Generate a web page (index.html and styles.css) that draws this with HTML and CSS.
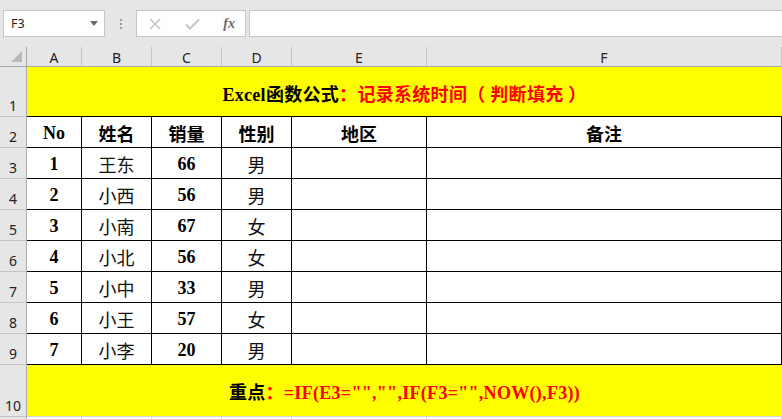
FILE: index.html
```html
<!DOCTYPE html>
<html lang="zh-CN">
  <head>
    <meta charset="UTF-8" />
    <title>记录系统时间</title>
    <link rel="stylesheet" href="styles.css">
  </head>
  <body>
    <div class="formula-bar">
      <div class="name-box">
        <span>F3</span>
        <svg class="drop" width="8" height="5" viewBox="0 0 8 5"><path d="M0 0H8L4 5Z" fill="#6a6a6a"/></svg>
      </div>
      <div class="grip"><i></i><i></i><i></i></div>
      <div class="fx-box">
        <svg width="12" height="12" viewBox="0 0 12 12"><path d="M1 1L11 11M11 1L1 11" stroke="#c4c4c4" stroke-width="1.6" fill="none"/></svg>
        <svg width="15" height="12" viewBox="0 0 15 12"><path d="M1 6.5L5 10.5L14 1.5" stroke="#c4c4c4" stroke-width="2" fill="none"/></svg>
        <span class="fx">fx</span>
      </div>
      <div class="formula-input"></div>
    </div>

    <div class="sheet">
      <div class="corner"><span class="tri"></span></div>
      <div class="col-head">A</div>
      <div class="col-head">B</div>
      <div class="col-head">C</div>
      <div class="col-head">D</div>
      <div class="col-head">E</div>
      <div class="col-head">F</div>

      <div class="row-head first">1</div>
      <div class="band title">Excel函数公式<em>：记录系统时间（ 判断填充 ）</em></div>

      <div class="row-head">2</div>
      <div class="cell head">No</div>
      <div class="cell head">姓名</div>
      <div class="cell head">销量</div>
      <div class="cell head">性别</div>
      <div class="cell head">地区</div>
      <div class="cell head">备注</div>

      <div class="row-head">3</div>
      <div class="cell num">1</div><div class="cell">王东</div><div class="cell num">66</div><div class="cell">男</div><div class="cell"></div><div class="cell"></div>
      <div class="row-head">4</div>
      <div class="cell num">2</div><div class="cell">小西</div><div class="cell num">56</div><div class="cell">男</div><div class="cell"></div><div class="cell"></div>
      <div class="row-head">5</div>
      <div class="cell num">3</div><div class="cell">小南</div><div class="cell num">67</div><div class="cell">女</div><div class="cell"></div><div class="cell"></div>
      <div class="row-head">6</div>
      <div class="cell num">4</div><div class="cell">小北</div><div class="cell num">56</div><div class="cell">女</div><div class="cell"></div><div class="cell"></div>
      <div class="row-head">7</div>
      <div class="cell num">5</div><div class="cell">小中</div><div class="cell num">33</div><div class="cell">男</div><div class="cell"></div><div class="cell"></div>
      <div class="row-head">8</div>
      <div class="cell num">6</div><div class="cell">小王</div><div class="cell num">57</div><div class="cell">女</div><div class="cell"></div><div class="cell"></div>
      <div class="row-head">9</div>
      <div class="cell num">7</div><div class="cell">小李</div><div class="cell num">20</div><div class="cell">男</div><div class="cell"></div><div class="cell"></div>

      <div class="row-head">10</div>
      <div class="band note">重点<em>：=IF(E3="","",IF(F3="",NOW(),F3))</em></div>

      <div class="row-head"></div>
      <div class="blank"></div><div class="blank"></div><div class="blank"></div><div class="blank"></div><div class="blank"></div><div class="blank"></div>
    </div>
  </body>
</html>
```

FILE: styles.css
```css
body {
  margin: 0;
  background: #fff;
  overflow: hidden;
  font-family: "Noto Sans", "Liberation Sans", sans-serif;
}
.formula-bar {
  height: 47px;
  box-sizing: border-box;
  background: #e6e6e6;
  display: flex;
  align-items: flex-start;
  padding: 10px 0 0 3px;
}
.name-box {
  width: 102px;
  height: 27px;
  box-sizing: border-box;
  background: #fff;
  border: 1px solid #c6c6c6;
  display: flex;
  align-items: center;
  justify-content: space-between;
  padding: 0 6px 0 7px;
  font-size: 12.5px;
  color: #222;
}
.grip {
  width: 31px;
  height: 27px;
  display: flex;
  flex-direction: column;
  align-items: center;
  justify-content: center;
  gap: 2px;
}
.grip i {
  width: 2px;
  height: 2px;
  background: #9a9a9a;
}
.fx-box {
  width: 110px;
  height: 27px;
  box-sizing: border-box;
  background: #fff;
  border: 1px solid #c6c6c6;
  display: flex;
  align-items: center;
  justify-content: space-between;
  padding: 0 10px 0 12px;
}
.fx {
  font-family: "Liberation Serif", serif;
  font-style: italic;
  font-weight: bold;
  font-size: 14px;
  color: #6a6a6a;
}
.formula-input {
  flex: 1;
  margin-left: 3px;
  height: 27px;
  box-sizing: border-box;
  background: #fff;
  border: 1px solid #c6c6c6;
  border-right: none;
}
.sheet {
  display: grid;
  grid-template-columns: 27px 55px 70px 70px 70px 135px 355px;
  grid-template-rows: 20px 49px repeat(8, 31px) 52px 3px;
  font-family: "Liberation Serif", "Noto Sans CJK SC", serif;
  font-size: 18px;
}
.sheet > div {
  box-sizing: border-box;
}
.corner {
  background: #e6e6e6;
  border-right: 1px solid #a9a9a9;
  border-bottom: 1px solid #a9a9a9;
  position: relative;
}
.tri {
  position: absolute;
  right: 4px;
  bottom: 4px;
  width: 0;
  height: 0;
  border-left: 11px solid transparent;
  border-bottom: 11px solid #b9b9b9;
}
.col-head {
  background: #e6e6e6;
  border-bottom: 1px solid #a9a9a9;
  border-right: 1px solid #c4c4c4;
  display: flex;
  align-items: center;
  justify-content: center;
  font-family: "Noto Sans", sans-serif;
  font-size: 14px;
  color: #222;
  padding-top: 1px;
}
.row-head {
  background: #e6e6e6;
  border-right: 1px solid #a9a9a9;
  border-top: 1px solid #c4c4c4;
  display: flex;
  align-items: flex-end;
  justify-content: center;
  font-family: "Noto Sans", sans-serif;
  font-size: 14px;
  color: #222;
  line-height: 1;
  padding-bottom: 3px;
}
.row-head.first {
  border-top: none;
}
.band {
  grid-column: span 6;
  background: #ffff00;
  display: flex;
  align-items: center;
  justify-content: center;
  font-weight: bold;
  color: #000;
  letter-spacing: 0.3px;
}
.band em {
  font-style: normal;
  color: #ff0000;
}
.title {
  padding-top: 2px;
}
.note {
  border-top: 1px solid #000;
  padding-top: 1px;
}
.cell {
  border-top: 1px solid #000;
  border-right: 1px solid #000;
  display: flex;
  align-items: center;
  justify-content: center;
  padding-top: 2px;
  color: #111;
}
.cell.head,
.cell.num {
  font-weight: bold;
  color: #000;
}
.blank {
  border-top: 1px solid #d4d4d4;
  border-right: 1px solid #d4d4d4;
}
```
